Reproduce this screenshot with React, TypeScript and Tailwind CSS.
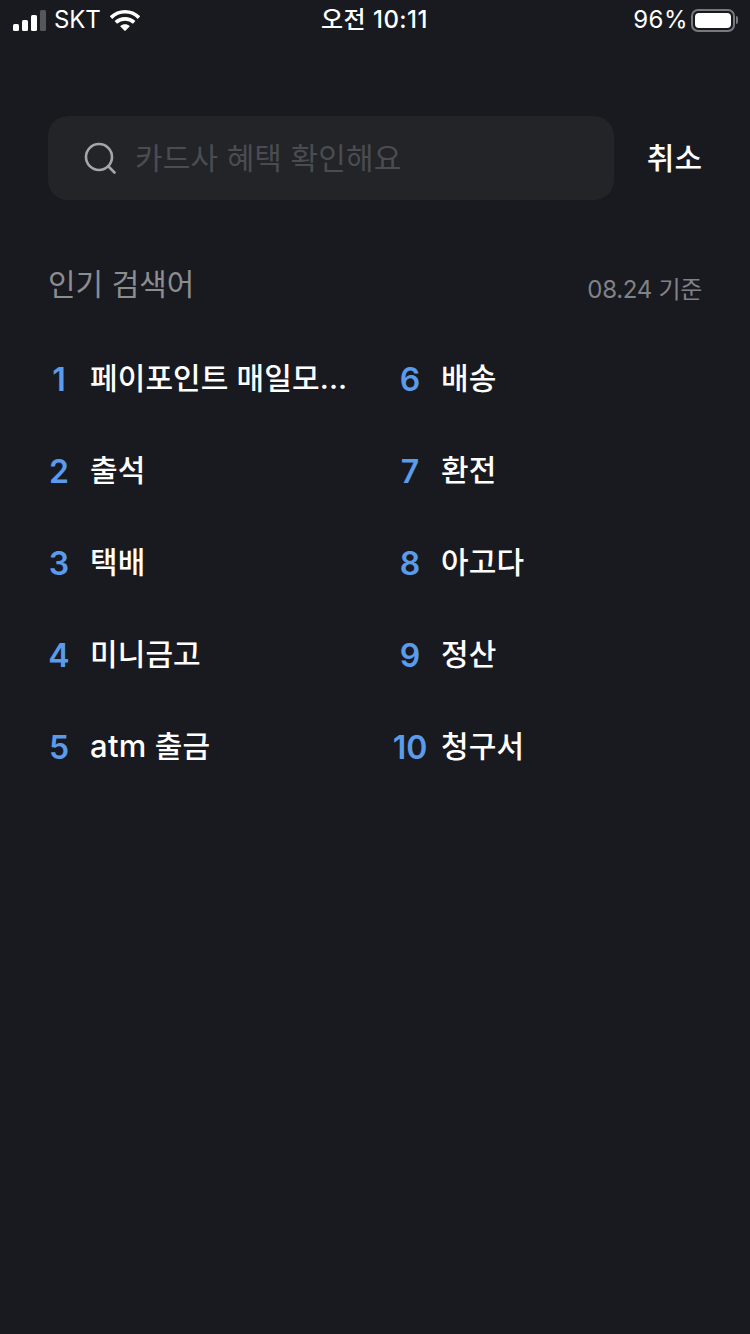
import type { ReactNode } from "react";

const FONT = "font-['Inter','Noto_Sans_CJK_KR',sans-serif]";

const left: [number, ReactNode][] = [
  [1, "페이포인트 매일모..."],
  [2, "출석"],
  [3, "택배"],
  [4, "미니금고"],
  [5, <><span className="text-[31px] tracking-[0.3px]">atm</span> 출금</>],
];
const right: [number, ReactNode][] = [
  [6, "배송"],
  [7, "환전"],
  [8, "아고다"],
  [9, "정산"],
  [10, "청구서"],
];

function Row({ n, label }: { n: number; label: ReactNode }) {
  return (
    <div className="flex h-[92px] items-center">
      <span className="w-[42px] shrink-0 pt-[3px] text-center text-[32px] font-semibold tracking-[0px] text-[#5a9ceb]">{n}</span>
      <span className="ml-[10px] whitespace-nowrap text-[30px] font-medium tracking-[0.1px] text-white">{label}</span>
    </div>
  );
}

function StatusBar() {
  return (
    <div className="flex h-[40px] items-center justify-between pl-[13px] pr-[12px] text-white">
      <div className="flex w-[250px] items-center">
        <svg width="34" height="22" viewBox="0 0 34 22">
          <rect x="0" y="15" width="6" height="7" rx="1.5" fill="#fff" />
          <rect x="9" y="11" width="6" height="11" rx="1.5" fill="#fff" />
          <rect x="18" y="6" width="6" height="16" rx="1.5" fill="#fff" />
          <rect x="27" y="1" width="6" height="21" rx="1.5" fill="#55575b" />
        </svg>
        <span className="ml-[7px] text-[24px] tracking-[-0.1px]">SKT</span>
        <svg className="ml-[9px]" width="30" height="22" viewBox="0 0 31 22">
          <path d="M1 8.500C9 .5 22 .5 30 8.500" fill="none" stroke="#fff" strokeWidth="3.800" />
          <path d="M6 13.500c5.500-5 13.500-5 19 0" fill="none" stroke="#fff" strokeWidth="3.800" />
          <path d="M10.500 17.500c3-2.700 7-2.700 10 0l-5 5z" fill="#fff" />
        </svg>
      </div>
      <span className="mr-[2px] text-[24px] font-medium tracking-[0.45px]">오전 10:11</span>
      <div className="flex w-[250px] items-center justify-end">
        <span className="text-[24px] tracking-[0.5px]">96%</span>
        <div className="ml-[3px] flex h-[23px] w-[44px] items-center rounded-[7px] border-2 border-[#77797c] p-[2px]">
          <div className="h-full w-full rounded-[4px] bg-white" />
        </div>
        <div className="ml-[1px] h-[8px] w-[2px] rounded-r bg-[#77797c]" />
      </div>
    </div>
  );
}

export default function App() {
  return (
    <div className={`${FONT} min-h-[1334px] w-[750px] bg-[#191a1f]`}>
      <StatusBar />
      <div className="mt-[76px] flex items-center pl-[48px] pr-[48px]">
        <div className="flex h-[84px] w-[566px] items-center rounded-[20px] bg-[#222428] pl-[36px]">
          <svg width="32" height="32" viewBox="0 0 32 32" fill="none" stroke="#a5a6a9" strokeWidth="2.600" strokeLinecap="round">
            <circle cx="15" cy="15" r="13" />
            <path d="M24.500 24.500 L30.500 30.500" />
          </svg>
          <span className="ml-[19px] text-[30px] tracking-[0.1px] text-[#4a4c51]">카드사 혜택 확인해요</span>
        </div>
        <span className="ml-auto text-[30px] font-medium tracking-[0px] text-white">취소</span>
      </div>
      <div className="mt-[61px] flex items-end justify-between pl-[48px] pr-[48px]">
        <span className="text-[30px] leading-[46px] tracking-[0px] text-[#8b8d91]">인기 검색어</span>
        <span className="text-[24px] leading-[34px] tracking-[-0.3px] text-[#808287]">08.24 기준</span>
      </div>
      <div className="mt-[25px] flex pl-[38px]">
        <div className="w-[351px]">
          {left.map(([n, l]) => <Row key={n} n={n} label={l} />)}
        </div>
        <div>
          {right.map(([n, l]) => <Row key={n} n={n} label={l} />)}
        </div>
      </div>
    </div>
  );
}
